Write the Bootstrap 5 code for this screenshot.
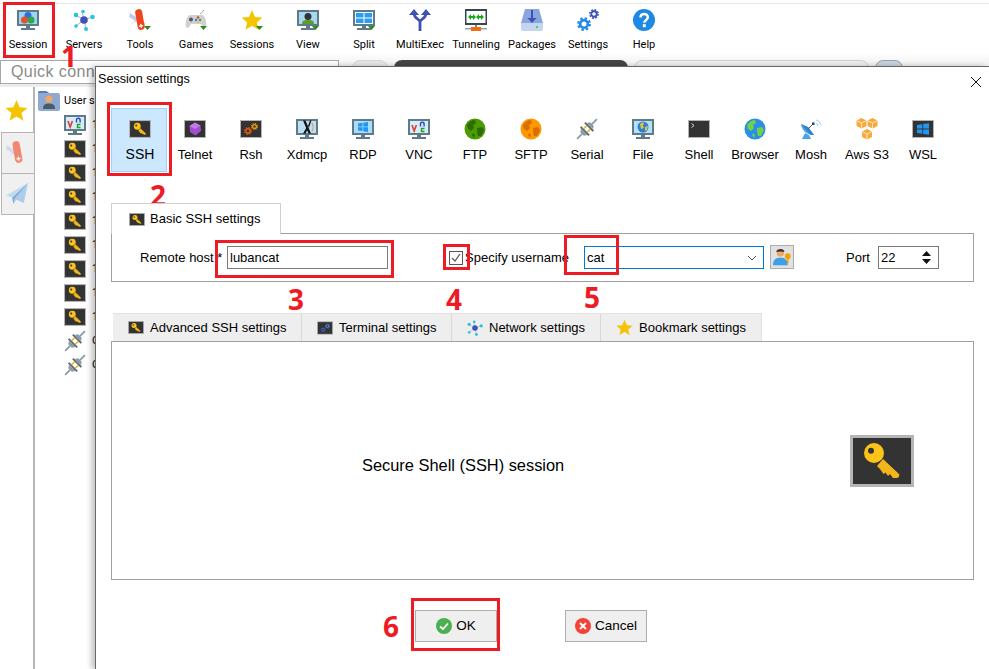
<!DOCTYPE html>
<html lang="en">
  <head>
    <meta charset="UTF-8" />
    <title>Session settings</title>
    <link href="https://cdn.jsdelivr.net/npm/bootstrap@5.3.2/dist/css/bootstrap.min.css" rel="stylesheet" />
    <style>
      html, body { height: 100%; }
      body {
        width: 989px;
        height: 669px;
        overflow: hidden;
        position: relative;
        background: #fff;
        color: #000;
        font-family: "Liberation Sans", Arial, sans-serif;
        font-size: 13px;
      }
      svg { display: block; flex: none; }
      .top-area {
        height: 84px;
        background: linear-gradient(#fff 50px, #ececec 66px);
      }
      .tool-bar { height: 57px; margin-top: 3px; border-top: 1px solid #e8e8e8; padding-top: 5px; }
      .tool-item { width: 56px; font-family: Roboto, sans-serif; font-size: 11px; line-height: 13px; }
      .tool-item svg { margin-bottom: 7px; }
      .quick-row { height: 24px; }
      .quick-box {
        width: 339px;
        height: 24px;
        border: 1px solid #a8a8a8;
        background: #fff;
        color: #8a8a8a;
        font-size: 16px;
        letter-spacing: 0.4px;
        padding-left: 10px;
        line-height: 21px;
      }
      .tab-stub { height: 24px; border-radius: 8px 8px 0 0; margin-left: 6px; }
      .stub-a { width: 36px; margin-left: 13px; background: #e6e6e6; border: 1px solid #cfd6dd; }
      .stub-b { width: 234px; background: #454545; }
      .stub-c { width: 235px; background: #ededed; border: 1px solid #c5d0da; }
      .stub-d { width: 28px; background: #c9d3dc; border: 1px solid #8fa3b5; }
      .side-rail { width: 35px; height: 585px; border-right: 2px solid #b5b5b5; }
      .rail-star { height: 46px; padding: 12px 0 0 5px; }
      .rail-tab {
        width: 33px;
        height: 42px;
        background: #f0f0f0;
        border: 1px solid #b5b5b5;
        border-right: 0;
        margin-left: 1px;
        margin-top: -1px;
        padding: 8px 0 0 4px;
      }
      .rail-tab svg { opacity: 0.6; }
      .tree-pane { padding: 2px 0 0 3px; }
      .tree-row { height: 24px; padding-left: 26px; gap: 6px; font-size: 11px; font-family: Roboto, sans-serif; }
      .tree-root { padding-left: 0; height: 24px; gap: 4px; font-size: 11px; font-family: Roboto, sans-serif; }
      .dialog-win {
        position: absolute;
        left: 95px;
        top: 66px;
        right: 0;
        bottom: 0;
        background: #fff;
        border-left: 1px solid #666;
        border-top: 1px solid #666;
        box-shadow: -4px 0 5px rgba(0, 0, 0, 0.22);
      }
      .dialog-title { height: 41px; padding: 5px 7px 0 2px; font-size: 12.6px; line-height: 15px; }
      .type-row { padding-left: 15px; height: 64px; }
      .type-item { width: 56px; height: 64px; padding-top: 9px; border: 1px solid transparent; line-height: 15px; }
      .type-item svg { margin-bottom: 7px; }
      .type-active { background: #cce8ff; border-color: #99d1ff; padding-left: 2px; font-size: 14px; }
      .tab-on {
        margin: 31px 0 0 15px;
        width: 170px;
        height: 31px;
        background: #fff;
        border: 1px solid #cfcfcf;
        border-bottom: 0;
        padding-left: 17px;
        gap: 5px;
        position: relative;
        z-index: 1;
      }
      .basic-panel {
        margin: -1px 15px 0 15px;
        height: 49px;
        border: 1px solid #a0a0a0;
        padding-left: 28px;
      }
      .field-box {
        height: 23px;
        border: 1px solid #7a7a7a;
        line-height: 21px;
        padding-left: 2px;
      }
      .host-label { width: 87px; }
      .host-box { width: 161px; margin-right: 61px; }
      .check-box { width: 14px; height: 14px; border: 1px solid #555; margin-right: 2px; }
      .user-label { width: 119px; }
      .user-box { width: 180px; border-color: #0078d7; padding-right: 6px; margin-right: 6px; }
      .user-btn { width: 24px; height: 24px; background: #e1e1e1; border: 1px solid #adadad; margin-right: 52px; margin-top: -2px; }
      .port-label { width: 32px; }
      .port-box { width: 61px; padding-right: 7px; }
      .lower-tabs { margin: 31px 0 0 17px; width: 649px; height: 28px; background: #eee; border-top: 1px solid #e2e2e2; }
      .lower-tab { height: 27px; padding-left: 15px; gap: 6px; border-right: 1px solid #d8d8d8; }
      .lt-1 { width: 189px; }
      .lt-2 { width: 150px; }
      .lt-3 { width: 149px; }
      .lt-4 { width: 161px; border-right: 1px solid #e2e2e2; }
      .desc-panel {
        margin: 0 15px;
        height: 239px;
        border: 1px solid #a0a0a0;
        padding: 0 59px 0 250px;
      }
      .desc-text { font-size: 16.4px; padding-top: 10px; }
      .foot-row { padding: 30px 0 0 319px; gap: 68px; }
      .foot-btn {
        width: 82px;
        height: 32px;
        background: #efefef;
        border: 1px solid #adadad;
        border-radius: 0;
        padding: 0;
        gap: 4px;
        font-size: 13.5px;
        color: #000;
      }
      .globe-ftp { --sea: #4a9c00; --land: #2e6b00; }
      .globe-sftp { --sea: #ff9800; --land: #d96f00; }
      .globe-web { --sea: #2a8fe6; --land: #6fd14a; }
      .anno-box { position: absolute; border: 3px solid #ed1c24; }
      .box-session { left: 3px; top: 2px; width: 52px; height: 56px; }
      .box-ssh { left: 107px; top: 102px; width: 65px; height: 74px; }
      .box-host { left: 215px; top: 240px; width: 179px; height: 38px; }
      .box-check { left: 443px; top: 244px; width: 27px; height: 26px; }
      .box-user { left: 564px; top: 235px; width: 55px; height: 40px; }
      .box-ok { left: 411px; top: 598px; width: 89px; height: 53px; }
      .anno-num {
        position: absolute;
        color: #ed1c24;
        font-family: "Open Sans", sans-serif;
        font-weight: 700;
        font-size: 28px;
        line-height: 28px;
      }
      .num-1 { left: 61px; top: 42px; }
      .num-2 { left: 150px; top: 181px; }
      .num-3 { left: 288px; top: 285px; }
      .num-4 { left: 446px; top: 285px; }
      .num-5 { left: 584px; top: 283px; }
      .num-6 { left: 383px; top: 612px; }
    </style>
  </head>
  <body>
    <!-- icon set -->
    <svg width="0" height="0" class="position-absolute">
      <defs>
        <symbol id="i-downmark" viewBox="0 0 22 22"><path d="M15 17h7l-3.500 4z" fill="#2e8b1e" /></symbol>
        <symbol id="i-monitor" viewBox="0 0 22 22">
          <rect x="0" y="1" width="22" height="16" fill="#5f7b89" />
          <rect x="9" y="17" width="4" height="2" fill="#5f7b89" />
          <rect x="4" y="19" width="14" height="2" fill="#5f7b89" />
        </symbol>
        <symbol id="i-session" viewBox="0 0 22 22">
          <use href="#i-monitor" />
          <rect x="2" y="3" width="18" height="12" fill="#9fd3f2" />
          <circle cx="11" cy="6.500" r="3.500" fill="#2f6fe0" />
          <circle cx="7.500" cy="11" r="3.500" fill="#e8502a" />
          <circle cx="14" cy="11" r="3.500" fill="#2fa84a" />
        </symbol>
        <symbol id="i-servers" viewBox="0 0 22 22">
          <path d="M11 11 3 6M11 11 9 2M11 11 19 8M11 11 3 17M11 11 13 20" stroke="#a9b4d6" stroke-width="1" />
          <circle cx="11" cy="11" r="3.800" fill="#3f51b5" />
          <circle cx="3" cy="6" r="2.300" fill="#26c6da" />
          <circle cx="10" cy="2.500" r="1.800" fill="#26c6da" />
          <circle cx="19.500" cy="8" r="2.300" fill="#26c6da" />
          <circle cx="3" cy="17" r="1.800" fill="#26c6da" />
          <circle cx="13" cy="20" r="2" fill="#26c6da" />
        </symbol>
        <symbol id="i-tools" viewBox="0 0 22 22">
          <path d="M1 4 16 14l-1 3L0 8zM1 17 9 8l2 3-8 3z" fill="#c4c8ec" />
          <g transform="rotate(-10 11 11)">
            <rect x="7.500" y="0" width="7" height="21" rx="3.500" fill="#f0441e" />
            <path d="M11 15v4M9 17h4" stroke="#fff" stroke-width="1.300" />
          </g>
        </symbol>
        <symbol id="i-games" viewBox="0 0 22 22">
          <path d="M15 5c2-1 2-2 4-4" stroke="#999" fill="none" />
          <path d="M5 6h12c3 0 5 7 4 12-1 2-3 1-5-3H6c-2 4-4 5-5 3C0 13 2 6 5 6z" fill="#cfd2d4" />
          <circle cx="6" cy="10.500" r="2" fill="#555" />
          <circle cx="13" cy="8.500" r="1.200" fill="#e53935" />
          <circle cx="11" cy="11" r="1.200" fill="#1e88e5" />
          <circle cx="15" cy="11" r="1.200" fill="#43a047" />
          <circle cx="13" cy="13" r="1.200" fill="#fbc02d" />
        </symbol>
        <symbol id="i-star" viewBox="0 0 22 22">
          <path d="M11 1l3 7 7.500.6-5.700 4.900 1.800 7.300L11 16.800l-6.600 4 1.800-7.300L.5 8.600 8 8z" fill="#f5c400" />
        </symbol>
        <symbol id="i-view" viewBox="0 0 22 22">
          <use href="#i-monitor" />
          <rect x="2" y="3" width="18" height="12" fill="#a6d8f0" />
          <circle cx="11" cy="7.500" r="3.500" fill="#333" />
          <path d="M5 15c0-4 3-4 6-4s6 0 6 4z" fill="#5e9c2d" />
        </symbol>
        <symbol id="i-split" viewBox="0 0 22 22">
          <use href="#i-monitor" />
          <rect x="2" y="3" width="18" height="12" fill="#fff" />
          <path d="M3 4h7.500v4.500H3zM11.500 4H19v4.500h-7.500zM3 9.500h7.500V14H3zM11.500 9.500H19V14h-7.500z" fill="#2a9df4" />
        </symbol>
        <symbol id="i-multi" viewBox="0 0 22 22">
          <path d="M11 22V13C11 10 5 10 5 4M11 13c0-3 6-3 6-9" fill="none" stroke="#3f51b5" stroke-width="2.800" />
          <path d="M0 6 5 0l5 6zM12 6l5-6 5 6z" fill="#3f51b5" />
        </symbol>
        <symbol id="i-tunnel" viewBox="0 0 22 22">
          <rect x="0" y="0" width="22" height="16" fill="#37474f" />
          <rect x="1.500" y="2" width="19" height="12" fill="#fff" />
          <path d="M6 8h3M14 8h3" stroke="#18a81c" stroke-width="1.800" />
          <path d="M6 5v6L3 8zM8 5l3 3-3 3zM14 5v6l-3-3zM16 5l3 3-3 3z" fill="#18a81c" />
          <rect x="10" y="16" width="2" height="3" fill="#78909c" />
          <rect x="0" y="19" width="22" height="1.500" fill="#90a4ae" />
          <rect x="6" y="18" width="10" height="4" fill="#f56c0b" />
        </symbol>
        <symbol id="i-packages" viewBox="0 0 22 22">
          <path d="M4 0h14l4 14H0z" fill="#8aa6de" />
          <path d="M0 14h22v6a2 2 0 0 1-2 2H2a2 2 0 0 1-2-2z" fill="#c3d5f0" />
          <path d="M11 1v9" stroke="#3f51b5" stroke-width="2" />
          <path d="M6.500 9h9L11 14z" fill="#3f51b5" />
          <rect x="15" y="17" width="2" height="2" fill="#5fd327" />
        </symbol>
        <symbol id="i-gear" viewBox="0 0 14 14">
          <circle cx="7" cy="7" r="3.800" fill="none" stroke="currentColor" stroke-width="2.600" />
          <circle cx="7" cy="7" r="5.800" fill="none" stroke="currentColor" stroke-width="2.200" stroke-dasharray="2.500 2.050" />
        </symbol>
        <symbol id="i-settings" viewBox="0 0 22 22">
          <g color="#1e88e5"><use href="#i-gear" x="0" y="8" width="14" height="14" /></g>
          <g color="#3f51b5"><use href="#i-gear" x="12" y="0" width="10" height="10" /></g>
        </symbol>
        <symbol id="i-help" viewBox="0 0 22 22">
          <circle cx="11" cy="11" r="11" fill="#1e88e5" />
          <path d="M7.500 8.500C7.500 3.800 14.800 3.800 14.800 8.300c0 2.900-3.500 2.900-3.500 5.400" fill="none" stroke="#fff" stroke-width="2.500" />
          <rect x="9.800" y="15.200" width="3" height="3" fill="#fff" />
        </symbol>
        <symbol id="i-box" viewBox="0 0 22 22">
          <rect x=".5" y="2.500" width="21" height="17" fill="#333" stroke="#b4b4b4" />
        </symbol>
        <symbol id="i-key" viewBox="0 0 64 52">
          <rect x="1.500" y="1.500" width="61" height="49" fill="#333" stroke="#b5b5b5" stroke-width="3" />
          <path d="M33 24 49 39q1 3-2 4h-4l-3-4-2 2-2.500-3.500-2 1.500-3.500-5-3-3z" fill="#f2b51c" />
          <circle cx="24" cy="18" r="10" fill="#fcc419" />
          <circle cx="21" cy="15.700" r="3" fill="#333" />
        </symbol>
        <symbol id="i-telnet" viewBox="0 0 22 22">
          <use href="#i-box" />
          <path d="M11 4.500 16.500 7.500 17 13 11.500 17.500 6 14 5.500 8z" fill="#a24ccf" />
          <path d="M11 4.500 16.500 7.500 11 11 5.500 8z" fill="#c27ae6" />
        </symbol>
        <symbol id="i-rsh" viewBox="0 0 22 22">
          <use href="#i-box" />
          <g color="#e8590c"><use href="#i-gear" x="4" y="9" width="8" height="8" /></g>
          <g color="#f59f00"><use href="#i-gear" x="11" y="5" width="7" height="7" /></g>
        </symbol>
        <symbol id="i-termset" viewBox="0 0 22 22">
          <use href="#i-box" />
          <g color="#3f6fd8"><use href="#i-gear" x="5" y="10" width="7" height="7" /></g>
          <g color="#5c8ef0"><use href="#i-gear" x="11" y="5" width="7" height="7" /></g>
        </symbol>
        <symbol id="i-xdmcp" viewBox="0 0 22 22">
          <use href="#i-monitor" />
          <rect x="2" y="3" width="18" height="12" fill="#bcdff3" />
          <path d="M16 5c1.500 2.500 1.500 6 0 8.500" fill="none" stroke="#f08a5d" />
          <path d="M7 2.500h2.500l5.500 13h-2.500zM7 15.500l3.500-6 1 2-2 4zM12 8l2-5.500h1.500l-2.500 7z" fill="#111" />
        </symbol>
        <symbol id="i-rdp" viewBox="0 0 22 22">
          <use href="#i-monitor" />
          <rect x="2" y="3" width="18" height="12" fill="#a9dcf7" />
          <path d="M6 5.500l4.500-.7v3.700H6zM11.300 4.700 16 4v4.500h-4.700zM6 9.300h4.500V13L6 12.400zM11.300 9.300H16V14l-4.700-.7z" fill="#2196f3" />
        </symbol>
        <symbol id="i-vnc" viewBox="0 0 22 22">
          <use href="#i-monitor" />
          <rect x="2" y="3" width="18" height="12" fill="#d6ecf8" />
          <path d="M4 7l2.200 6L8.400 7" fill="none" stroke="#e53935" stroke-width="1.600" />
          <path d="M12.500 8.500V6a1.800 1.800 0 0 1 3.600 0v2.500" fill="none" stroke="#2846c8" stroke-width="1.400" />
          <path d="M16.500 10.500h-3v3h3" fill="none" stroke="#18a81c" stroke-width="1.400" />
        </symbol>
        <symbol id="i-globe" viewBox="0 0 22 22">
          <circle cx="11" cy="11" r="10.500" fill="var(--sea)" />
          <path d="M3 7c2-3 5-5 8-5l1 3-3 2 1 3-3 3-3-2zM13 10l5-1 2 3-3 6-3 0-1-4zM9 15l2 2-1 3-2-3z" fill="var(--land)" />
        </symbol>
        <symbol id="i-plug" viewBox="0 0 22 22">
          <g transform="rotate(-45 11 11)">
            <path d="M-3 11H4M18 11H25" stroke="#8a9ba5" stroke-width="1.800" />
            <path d="M4 8.500 7 6.500V15.500L4 13.500z" fill="#8a9ba5" />
            <rect x="7" y="5" width="2" height="12" fill="#5a6b75" />
            <path d="M9 8.500h4M9 13.500h4" stroke="#f5b82e" stroke-width="1.600" />
            <rect x="13" y="5" width="2" height="12" fill="#5a6b75" />
            <path d="M15 6.500 18 8.500V13.500L15 15.500z" fill="#8a9ba5" />
          </g>
        </symbol>
        <symbol id="i-file" viewBox="0 0 22 22">
          <use href="#i-monitor" />
          <rect x="2" y="3" width="18" height="12" fill="#b6e0f7" />
          <circle cx="11" cy="9" r="5.500" fill="#2b7fd4" />
          <path d="M8 6c1-1 3-2 4-1l-1 3 1 2-3 1zM13 9l3-1-1 4-2 1z" fill="#e4c341" />
        </symbol>
        <symbol id="i-shell" viewBox="0 0 22 22">
          <use href="#i-box" />
          <path d="M3.500 5.500 6 7.500 3.500 9.500" fill="none" stroke="#ddd" stroke-width="1" />
        </symbol>
        <symbol id="i-mosh" viewBox="0 0 22 22">
          <path d="M1 6c1 7 6 11 13 11L8 9z" fill="#4da3e8" />
          <path d="M1 6c2 1 4 2 7 3l6 8c-2 0-3 0-4-.5z" fill="#2f83cf" />
          <path d="M8 11 13 6" stroke="#555" />
          <rect x="12" y="4.500" width="2.500" height="2.500" fill="#1d3f8a" />
          <path d="M5 15 2 21h9l-2-4z" fill="#4da3e8" />
          <path d="M16 5c1 .5 1.500 1.500 2 3M16 2c2.500 .5 4 2.500 5 5" fill="none" stroke="#8ccbf2" />
        </symbol>
        <symbol id="i-aws" viewBox="0 0 22 22">
          <path d="M5.500 0 10.500 2.500V8L5.500 10.500.5 8V2.500zM16.500 0 21.500 2.500V8L16.500 10.500 11.500 8V2.500zM11 11 16 13.500V19L11 21.500 6 19V13.500z" fill="#f7a93b" />
          <path d="M.5 2.500 5.500 5 10.500 2.500M5.500 5v5.500M11.500 2.500 16.500 5 21.500 2.500M16.500 5v5.500M6 13.500 11 16 16 13.500M11 16v5.500" fill="none" stroke="#fff" stroke-width=".7" />
        </symbol>
        <symbol id="i-wsl" viewBox="0 0 22 22">
          <use href="#i-box" />
          <path d="M5 7l5.300-.8v4.300H5zM11.200 6 17 5.200v5.300h-5.800zM5 11.500h5.300v4.300L5 15zM11.200 11.500H17v5.300l-5.800-.8z" fill="#2196f3" />
        </symbol>
        <symbol id="i-folder" viewBox="0 0 22 20">
          <path d="M0 2q0-2 2-2h6l3 2h9q2 0 2 2v14q0 2-2 2H2q-2 0-2-2z" fill="#8fa9cf" />
          <path d="M0 2q0-2 2-2h6l3 2z" fill="#4b7fc9" />
          <circle cx="11" cy="8" r="3.500" fill="#f0a868" />
          <path d="M5 18c0-5 3-5.500 6-5.500s6 .5 6 5.500z" fill="#4a5a6a" />
        </symbol>
        <symbol id="i-send" viewBox="0 0 22 22">
          <path d="M21 1 0 13l6 2z" fill="#9fd0f5" />
          <path d="M21 1 6 15l1 6 3-4 7 3z" fill="#7fb8ea" />
          <path d="M21 1 6 15l1 6 1-5z" fill="#3f78c4" />
        </symbol>
        <symbol id="i-userkey" viewBox="0 0 22 22">
          <circle cx="9" cy="6" r="4.500" fill="#f0a868" />
          <path d="M4 5c0-5 10-5 10 0-3-1-7-1-10 0z" fill="#333" />
          <path d="M0 21c0-7 4-9 9-9s9 2 9 9z" fill="#3aa0e8" />
          <circle cx="18" cy="10" r="3.500" fill="#f59f00" />
          <path d="M17 12h2v7h-2z" fill="#f59f00" />
        </symbol>
        <symbol id="i-ok" viewBox="0 0 16 16">
          <circle cx="8" cy="8" r="8" fill="#4caf50" />
          <path d="M4 8.500 7 11 12 5.500" fill="none" stroke="#fff" stroke-width="1.800" />
        </symbol>
        <symbol id="i-cancel" viewBox="0 0 16 16">
          <circle cx="8" cy="8" r="8" fill="#f44336" />
          <path d="M5 5l6 6M11 5l-6 6" fill="none" stroke="#fff" stroke-width="2" />
        </symbol>
      </defs>
    </svg>

    <!-- main window behind the dialog -->
    <div class="top-area">
      <div class="tool-bar d-flex">
        <div class="tool-item d-flex flex-column align-items-center"><svg width="22" height="22"><use href="#i-session" /></svg>Session</div>
        <div class="tool-item d-flex flex-column align-items-center"><svg width="22" height="22"><use href="#i-servers" /></svg>Servers</div>
        <div class="tool-item d-flex flex-column align-items-center"><svg width="22" height="22"><use href="#i-tools" /><use href="#i-downmark" /></svg>Tools</div>
        <div class="tool-item d-flex flex-column align-items-center"><svg width="22" height="22"><use href="#i-games" /><use href="#i-downmark" /></svg>Games</div>
        <div class="tool-item d-flex flex-column align-items-center"><svg width="22" height="22"><use href="#i-star" /><use href="#i-downmark" /></svg>Sessions</div>
        <div class="tool-item d-flex flex-column align-items-center"><svg width="22" height="22"><use href="#i-view" /><use href="#i-downmark" /></svg>View</div>
        <div class="tool-item d-flex flex-column align-items-center"><svg width="22" height="22"><use href="#i-split" /><use href="#i-downmark" /></svg>Split</div>
        <div class="tool-item d-flex flex-column align-items-center"><svg width="22" height="22"><use href="#i-multi" /></svg>MultiExec</div>
        <div class="tool-item d-flex flex-column align-items-center"><svg width="22" height="22"><use href="#i-tunnel" /></svg>Tunneling</div>
        <div class="tool-item d-flex flex-column align-items-center"><svg width="22" height="22"><use href="#i-packages" /></svg>Packages</div>
        <div class="tool-item d-flex flex-column align-items-center"><svg width="22" height="22"><use href="#i-settings" /></svg>Settings</div>
        <div class="tool-item d-flex flex-column align-items-center"><svg width="22" height="22"><use href="#i-help" /></svg>Help</div>
      </div>
      <div class="quick-row d-flex">
        <div class="quick-box">Quick conn</div>
        <div class="tab-stub stub-a"></div>
        <div class="tab-stub stub-b"></div>
        <div class="tab-stub stub-c"></div>
        <div class="tab-stub stub-d"></div>
      </div>
    </div>

    <div class="d-flex">
      <div class="side-rail">
        <div class="rail-star"><svg width="23" height="23"><use href="#i-star" /></svg></div>
        <div class="rail-tab"><svg width="23" height="23"><use href="#i-tools" /></svg></div>
        <div class="rail-tab"><svg width="23" height="23"><use href="#i-send" /></svg></div>
      </div>
      <div class="tree-pane flex-grow-1">
        <div class="tree-root d-flex align-items-center"><svg width="22" height="20"><use href="#i-folder" /></svg>User s</div>
        <div class="tree-row d-flex align-items-center"><svg width="22" height="22"><use href="#i-vnc" /></svg>1</div>
        <div class="tree-row d-flex align-items-center"><svg width="22" height="18"><use href="#i-key" /></svg>1</div>
        <div class="tree-row d-flex align-items-center"><svg width="22" height="18"><use href="#i-key" /></svg>1</div>
        <div class="tree-row d-flex align-items-center"><svg width="22" height="18"><use href="#i-key" /></svg>1</div>
        <div class="tree-row d-flex align-items-center"><svg width="22" height="18"><use href="#i-key" /></svg>1</div>
        <div class="tree-row d-flex align-items-center"><svg width="22" height="18"><use href="#i-key" /></svg>1</div>
        <div class="tree-row d-flex align-items-center"><svg width="22" height="18"><use href="#i-key" /></svg>1</div>
        <div class="tree-row d-flex align-items-center"><svg width="22" height="18"><use href="#i-key" /></svg>1</div>
        <div class="tree-row d-flex align-items-center"><svg width="22" height="18"><use href="#i-key" /></svg>1</div>
        <div class="tree-row d-flex align-items-center"><svg width="22" height="22"><use href="#i-plug" /></svg>C</div>
        <div class="tree-row d-flex align-items-center"><svg width="22" height="22"><use href="#i-plug" /></svg>C</div>
      </div>
    </div>

    <!-- session settings dialog -->
    <div class="dialog-win">
      <div class="dialog-title d-flex justify-content-between">
        <span>Session settings</span>
        <svg width="12" height="12" viewBox="0 0 12 12" class="mt-1"><path d="M1 1l10 10M11 1 1 11" stroke="#111" fill="none" /></svg>
      </div>

      <div class="type-row d-flex">
        <div class="type-item type-active d-flex flex-column align-items-center"><svg width="22" height="22"><use href="#i-box" /><use href="#i-key" x="0" y="2" width="22" height="18" /></svg>SSH</div>
        <div class="type-item d-flex flex-column align-items-center"><svg width="22" height="22"><use href="#i-telnet" /></svg>Telnet</div>
        <div class="type-item d-flex flex-column align-items-center"><svg width="22" height="22"><use href="#i-rsh" /></svg>Rsh</div>
        <div class="type-item d-flex flex-column align-items-center"><svg width="22" height="22"><use href="#i-xdmcp" /></svg>Xdmcp</div>
        <div class="type-item d-flex flex-column align-items-center"><svg width="22" height="22"><use href="#i-rdp" /></svg>RDP</div>
        <div class="type-item d-flex flex-column align-items-center"><svg width="22" height="22"><use href="#i-vnc" /></svg>VNC</div>
        <div class="type-item d-flex flex-column align-items-center"><svg width="22" height="22" class="globe-ftp"><use href="#i-globe" /></svg>FTP</div>
        <div class="type-item d-flex flex-column align-items-center"><svg width="22" height="22" class="globe-sftp"><use href="#i-globe" /></svg>SFTP</div>
        <div class="type-item d-flex flex-column align-items-center"><svg width="22" height="22"><use href="#i-plug" /></svg>Serial</div>
        <div class="type-item d-flex flex-column align-items-center"><svg width="22" height="22"><use href="#i-file" /></svg>File</div>
        <div class="type-item d-flex flex-column align-items-center"><svg width="22" height="22"><use href="#i-shell" /></svg>Shell</div>
        <div class="type-item d-flex flex-column align-items-center"><svg width="22" height="22" class="globe-web"><use href="#i-globe" /></svg>Browser</div>
        <div class="type-item d-flex flex-column align-items-center"><svg width="22" height="22"><use href="#i-mosh" /></svg>Mosh</div>
        <div class="type-item d-flex flex-column align-items-center"><svg width="22" height="22"><use href="#i-aws" /></svg>Aws S3</div>
        <div class="type-item d-flex flex-column align-items-center"><svg width="22" height="22"><use href="#i-wsl" /></svg>WSL</div>
      </div>

      <div class="tab-on d-flex align-items-center"><svg width="16" height="13"><use href="#i-key" /></svg>Basic SSH settings</div>
      <div class="basic-panel d-flex align-items-center">
        <span class="host-label">Remote host *</span>
        <div class="field-box host-box">lubancat</div>
        <div class="check-box d-flex align-items-center justify-content-center">
          <svg width="10" height="10" viewBox="0 0 10 10"><path d="M1 5l3 3 5-7" fill="none" stroke="#555" stroke-width="1.200" /></svg>
        </div>
        <span class="user-label">Specify username</span>
        <div class="field-box user-box d-flex align-items-center justify-content-between">
          cat
          <svg width="10" height="6" viewBox="0 0 10 6"><path d="M1 1l4 4 4-4" fill="none" stroke="#555" /></svg>
        </div>
        <div class="user-btn d-flex align-items-center justify-content-center"><svg width="18" height="18"><use href="#i-userkey" /></svg></div>
        <span class="port-label">Port</span>
        <div class="field-box port-box d-flex align-items-center justify-content-between">
          22
          <svg width="9" height="15" viewBox="0 0 9 15"><path d="M0 6 4.500 1 9 6zM0 9l4.500 5L9 9z" fill="#111" /></svg>
        </div>
      </div>

      <div class="lower-tabs d-flex">
        <div class="lower-tab lt-1 d-flex align-items-center"><svg width="16" height="13"><use href="#i-key" /></svg>Advanced SSH settings</div>
        <div class="lower-tab lt-2 d-flex align-items-center"><svg width="16" height="16"><use href="#i-termset" /></svg>Terminal settings</div>
        <div class="lower-tab lt-3 d-flex align-items-center"><svg width="16" height="16"><use href="#i-servers" /></svg>Network settings</div>
        <div class="lower-tab lt-4 d-flex align-items-center"><svg width="17" height="17"><use href="#i-star" /></svg>Bookmark settings</div>
      </div>
      <div class="desc-panel d-flex align-items-center justify-content-between">
        <span class="desc-text">Secure Shell (SSH) session</span>
        <svg width="64" height="52"><use href="#i-key" /></svg>
      </div>

      <div class="foot-row d-flex">
        <button class="btn foot-btn d-flex align-items-center justify-content-center"><svg width="16" height="16"><use href="#i-ok" /></svg>OK</button>
        <button class="btn foot-btn d-flex align-items-center justify-content-center"><svg width="16" height="16"><use href="#i-cancel" /></svg>Cancel</button>
      </div>
    </div>

    <!-- red annotations on top of the screenshot -->
    <div class="anno-box box-session"></div>
    <div class="anno-box box-ssh"></div>
    <div class="anno-box box-host"></div>
    <div class="anno-box box-check"></div>
    <div class="anno-box box-user"></div>
    <div class="anno-box box-ok"></div>
    <div class="anno-num num-1">1</div>
    <div class="anno-num num-2">2</div>
    <div class="anno-num num-3">3</div>
    <div class="anno-num num-4">4</div>
    <div class="anno-num num-5">5</div>
    <div class="anno-num num-6">6</div>

    <script src="https://cdn.jsdelivr.net/npm/bootstrap@5.3.2/dist/js/bootstrap.bundle.min.js"></script>
  </body>
</html>
